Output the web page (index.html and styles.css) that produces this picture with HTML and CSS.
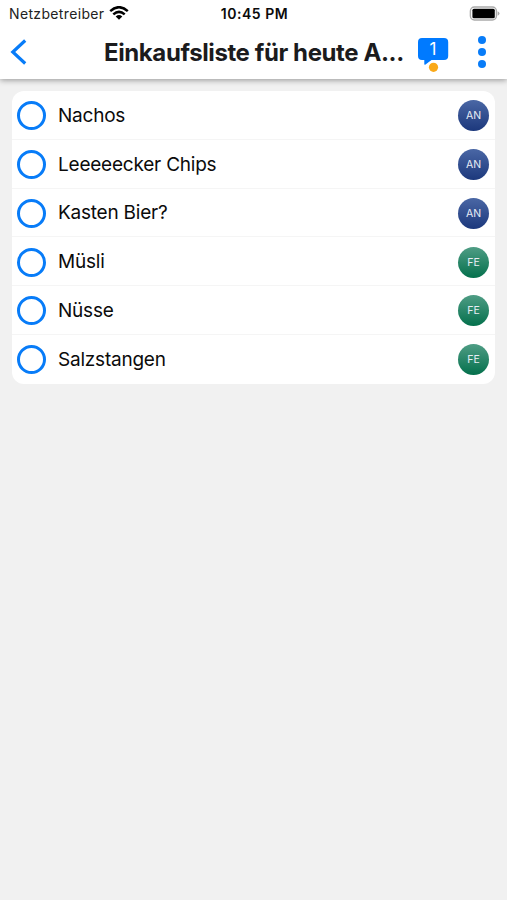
FILE: index.html
```html
<!DOCTYPE html>
<html lang="de">
<head>
<meta charset="utf-8">
<title>Einkaufsliste</title>
<link rel="stylesheet" href="styles.css">
</head>
<body>
<header class="top">
  <div class="status">
    <div class="carrier"><span>Netzbetreiber</span>
      <svg class="wifi" width="20" height="14" viewBox="0 0 20 14"><g fill="none" stroke="#000" stroke-width="2.5"><path d="M1.2 5.1Q10-2.7 18.8 5.1"/><path d="M4.3 8.4Q10 3.3 15.7 8.4"/></g><path d="M6.7 10.4Q10 7.6 13.3 10.4L10 13.7Z"/></svg>
    </div>
    <div class="time">10:45 PM</div>
    <svg class="battery" width="32" height="16" viewBox="0 0 32 16"><rect x="2.4" y="1" width="26" height="13" rx="4" fill="#fff" stroke="#aaa" stroke-width="1.4"/><rect x="4.4" y="2.8" width="22.4" height="9.4" rx="1.5"/><path d="M29.6 5.3Q31.5 6 31.5 7.5T29.6 9.7Z" fill="#aaa"/></svg>
  </div>
  <nav class="bar">
    <svg class="back" width="20" height="28" viewBox="0 0 20 28"><path d="M16.2 2.5 3.8 14 16.2 25.500" fill="none" stroke="#087cf8" stroke-width="3.2"/></svg>
    <h1 class="title">Einkaufsliste für heute A...</h1>
    <div class="chat">
      <svg width="32" height="36" viewBox="0 0 32 36"><path d="M5 1H27Q31.200 1 31.200 5V19Q31.200 23 27 23H14.500L8.500 27.500Q7.300 28.300 7.300 27V23H5Q1 23 1 19V5Q1 1 5 1Z" fill="#007aff"/><circle cx="16.5" cy="30.300" r="4.6" fill="#faa919"/></svg>
      <span class="count">1</span>
    </div>
    <svg class="more" width="10" height="34" viewBox="0 0 10 34" fill="#087cf8"><circle cx="5" cy="5" r="4"/><circle cx="5" cy="17" r="4"/><circle cx="5" cy="29" r="4"/></svg>
  </nav>
</header>
<ul class="list">
  <li class="row"><i class="check"></i><span class="name">Nachos</span><b class="avatar an">AN</b></li>
  <li class="row"><i class="check"></i><span class="name">Leeeeecker Chips</span><b class="avatar an">AN</b></li>
  <li class="row"><i class="check"></i><span class="name">Kasten Bier?</span><b class="avatar an">AN</b></li>
  <li class="row"><i class="check"></i><span class="name">Müsli</span><b class="avatar fe">FE</b></li>
  <li class="row"><i class="check"></i><span class="name">Nüsse</span><b class="avatar fe">FE</b></li>
  <li class="row"><i class="check"></i><span class="name">Salzstangen</span><b class="avatar fe">FE</b></li>
</ul>
</body>
</html>
```
FILE: styles.css
```css
* { box-sizing: border-box; }
body { margin: 0; min-height: 100vh; background: #f1f1f1; color: #0b0b0b; font-family: Inter, "Liberation Sans", sans-serif; }
.top { height: 79px; background: #fff; box-shadow: 0 1px 6px rgba(0,0,0,.4); }
.status { height: 26px; padding: 0 7px 0 9px; display: grid; grid-template-columns: 1fr auto 1fr; align-items: center; line-height: 27px; }
.carrier { display: flex; align-items: center; gap: 5px; font-size: 14px; letter-spacing: .35px; color: #222; }
.wifi { margin-bottom: 1px; }
.time { font-size: 14px; font-weight: 600; letter-spacing: .55px; }
.battery { justify-self: end; }
.bar { height: 52px; display: flex; align-items: center; padding: 0 20px 0 9px; }
.back { flex: none; }
.title { margin: 1px 0 0 75px; width: 313px; font-size: 24px; line-height: 52px; font-weight: 650; letter-spacing: -.4px; white-space: nowrap; color: #1b1b1d; }
.chat { position: relative; width: 32px; height: 36px; margin-top: 6px; }
.chat svg { display: block; }
.count { position: absolute; inset: 0 0 auto; line-height: 25px; text-align: center; color: #fff; font-size: 17px; }
.more { margin-left: auto; }
.list { list-style: none; margin: 12px 12px 0; padding: 0; background: #fff; border-radius: 12px; overflow: hidden; }
.row { height: 48.84px; display: flex; align-items: center; padding: .3px 6px 0 5px; box-shadow: inset 0 -1px #f5f5f5; }
.row:last-child { box-shadow: none; }
.check { width: 29px; height: 29px; border: 3px solid #087cf8; border-radius: 50%; }
.name { margin-left: 12px; font-size: 19px; letter-spacing: -.22px; line-height: 24px; padding-top: .5px; white-space: nowrap; }
.avatar { margin-left: auto; width: 31px; height: 31px; border-radius: 50%; font-size: 10.5px; font-weight: 400; line-height: 31px; text-align: center; color: #e8edf5; }
.an { background: linear-gradient(#4a67a5, #1c387c); }
.fe { background: linear-gradient(#4f9d85, #04704c); }
```
